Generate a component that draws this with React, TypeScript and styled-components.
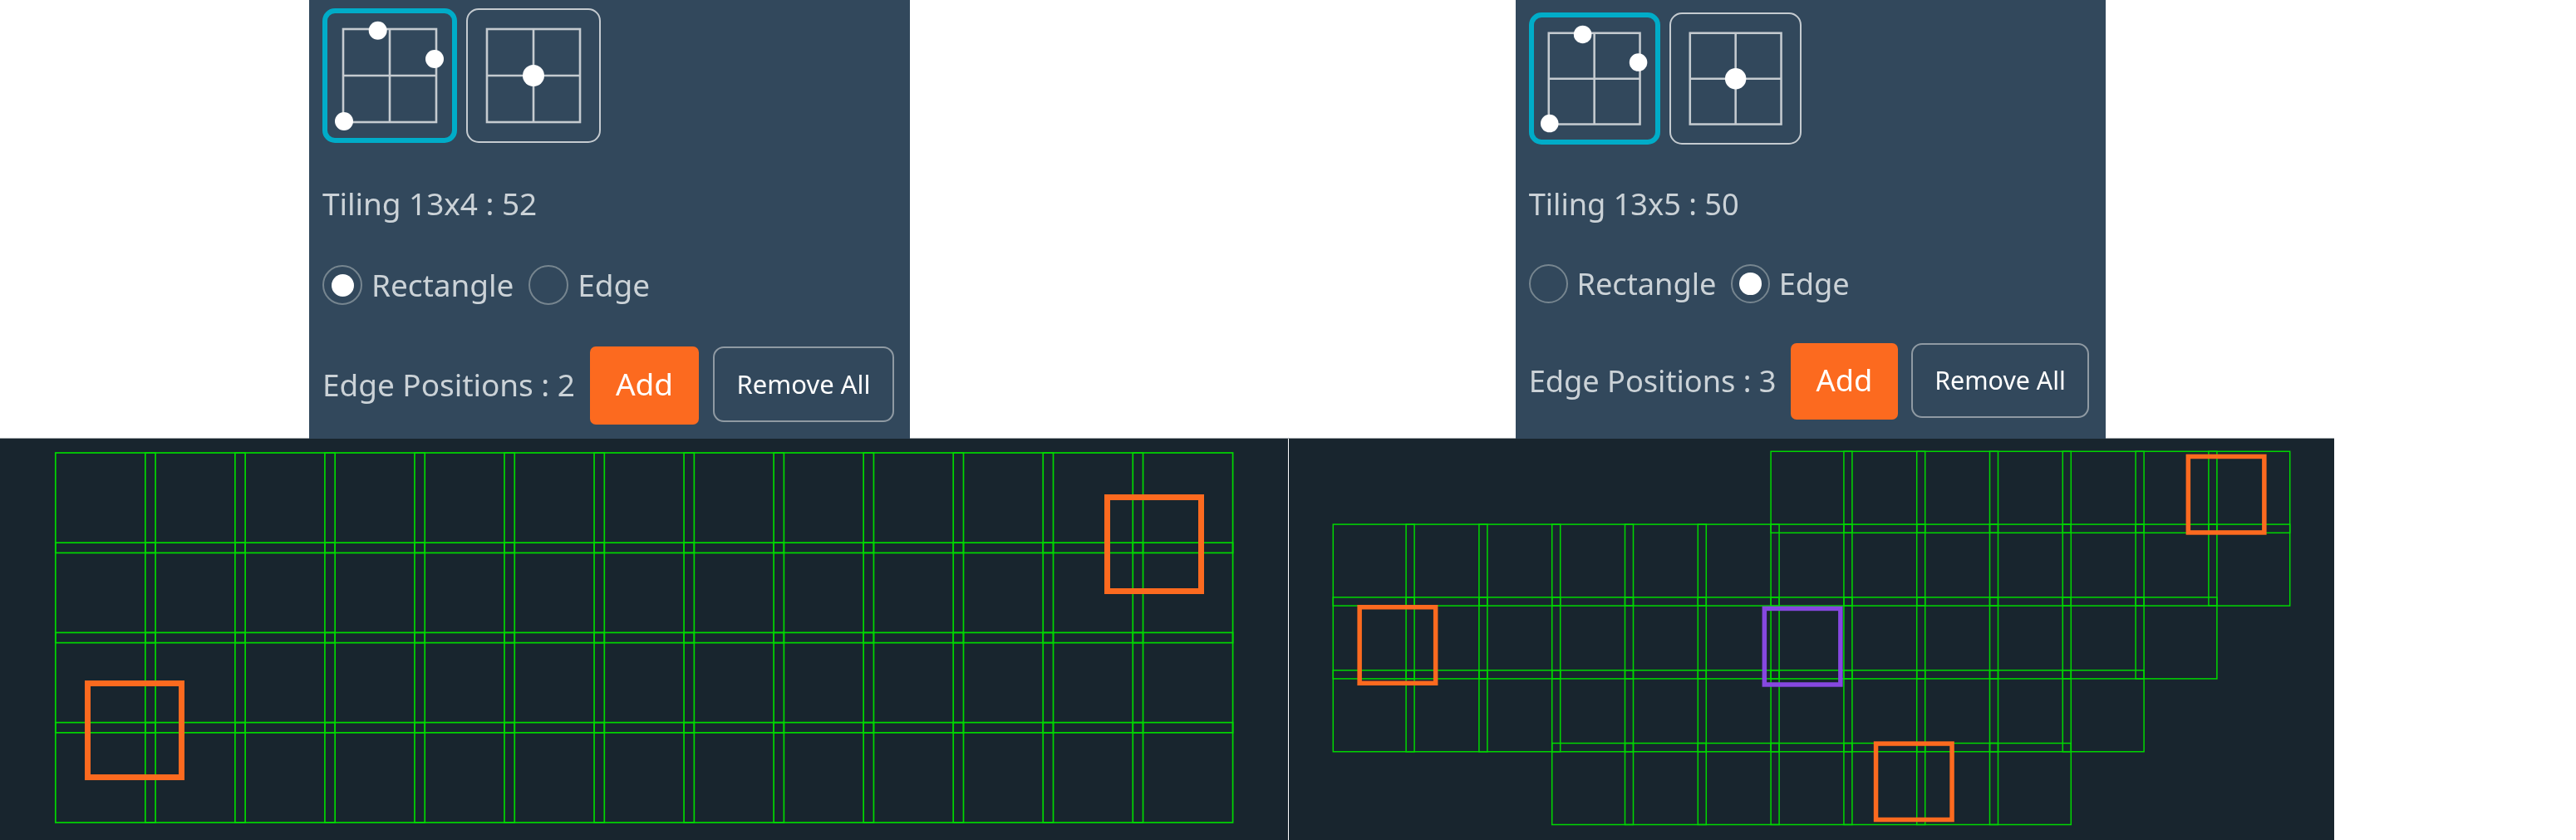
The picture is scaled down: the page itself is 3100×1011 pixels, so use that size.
import React, { FC } from 'react';
import styled, { createGlobalStyle } from 'styled-components';

const GlobalStyle = createGlobalStyle`
  html, body {
    margin: 0;
    padding: 0;
    background: #fff;
  }
  body {
    width: 3100px;
    height: 1011px;
    overflow: hidden;
    font-family: "Noto Sans", "Open Sans", sans-serif;
  }
`;

const colors = {
  panel: '#32485c',
  canvas: '#18252e',
  text: '#cbd2d7',
  line: '#c5cbd0',
  cyan: '#00acc8',
  orange: '#fc6a1f',
  purple: '#8648e0',
  green: '#00d800',
};

const Page = styled.div`
  display: flex;
  flex-direction: column;
  width: 3100px;
  height: 1011px;
`;

const TopRow = styled.div`
  display: flex;
  width: 2809px;
  height: 528px;
  padding-left: 372px;
  box-sizing: border-box;
  box-shadow: inset 0 -1px 0 #9ea3a8;
`;

const Panel = styled.div<{ $s: number; $width: number; $left: number; $top: number }>`
  width: ${p => p.$width}px;
  margin-left: ${p => p.$left}px;
  padding: ${p => p.$top}px 0 0 ${p => 16 * p.$s}px;
  box-sizing: border-box;
  background: ${colors.panel};
  color: ${colors.text};
  --s: ${p => p.$s};

  > * {
    filter: blur(0.5px);
  }
`;

const IconRow = styled.div`
  display: flex;
  gap: calc(11px * var(--s));
`;

const IconButton = styled.div<{ $active?: boolean }>`
  display: flex;
  align-items: center;
  justify-content: center;
  box-sizing: border-box;
  width: calc(162px * var(--s));
  height: calc(162px * var(--s));
  border: ${p => (p.$active ? `6px solid ${colors.cyan}` : `2.5px solid ${colors.line}`)};
  border-radius: 15px;

  svg {
    flex: none;
    width: calc(134px * var(--s));
    height: calc(134px * var(--s));
  }
`;

const Tiling = styled.div`
  margin-top: calc(48px * var(--s));
  height: calc(50px * var(--s));
  line-height: calc(50px * var(--s));
  font-size: calc(37px * var(--s));
  letter-spacing: -0.05px;
  white-space: nowrap;
`;

const RadioRow = styled.div`
  display: flex;
  align-items: center;
  margin-top: calc(49px * var(--s));
  height: calc(48px * var(--s));
`;

const RadioCircle = styled.span<{ $checked?: boolean }>`
  display: flex;
  align-items: center;
  justify-content: center;
  box-sizing: border-box;
  width: calc(48px * var(--s));
  height: calc(48px * var(--s));
  border: 2px solid #76858f;
  border-radius: 50%;

  &::after {
    content: '';
    display: ${p => (p.$checked ? 'block' : 'none')};
    width: calc(27px * var(--s));
    height: calc(27px * var(--s));
    border-radius: 50%;
    background: #fff;
  }
`;

const RadioLabel = styled.span`
  margin: 0 calc(18px * var(--s)) 0 calc(11px * var(--s));
  font-size: calc(37px * var(--s));
  line-height: calc(48px * var(--s));
  letter-spacing: -0.05px;
`;

const ActionRow = styled.div`
  display: flex;
  align-items: flex-start;
  margin-top: calc(49.5px * var(--s));
`;

const PositionsLabel = styled.div`
  width: calc(322px * var(--s));
  height: calc(94px * var(--s));
  line-height: calc(92px * var(--s));
  font-size: calc(37px * var(--s));
  letter-spacing: -0.05px;
  white-space: nowrap;
`;

const AddButton = styled.div`
  width: calc(131px * var(--s));
  height: calc(94px * var(--s));
  line-height: calc(90px * var(--s));
  margin-right: calc(17px * var(--s));
  border-radius: 7px;
  background: ${colors.orange};
  color: #fff;
  text-align: center;
  font-size: calc(37px * var(--s));
`;

const RemoveButton = styled.div`
  box-sizing: border-box;
  width: calc(218px * var(--s));
  height: calc(91px * var(--s));
  line-height: calc(87px * var(--s));
  border: 2px solid #8f9aa3;
  border-radius: 13px;
  color: #fff;
  text-align: center;
  font-size: calc(31px * var(--s));
`;

const BottomRow = styled.div`
  display: flex;
  flex: 1;
`;

const Canvas = styled.div<{ $width: number; $divider?: boolean }>`
  width: ${p => p.$width}px;
  height: 483px;
  box-sizing: border-box;
  background: ${colors.canvas};
  border-right: ${p => (p.$divider ? '1px solid #fff' : 'none')};

  svg {
    display: block;
  }
`;

interface Rect {
  x: number;
  y: number;
  w: number;
  h: number;
}

interface Marker {
  x: number;
  y: number;
  color: string;
}

// rows of the staggered tiling: first column and tile count
const staggeredRows = [
  { from: 6, count: 7 },
  { from: 0, count: 13 },
  { from: 0, count: 12 },
  { from: 0, count: 11 },
  { from: 3, count: 7 },
];

const leftTiles: Rect[] = [];
for (let row = 0; row < 4; row++) {
  for (let col = 0; col < 13; col++) {
    leftTiles.push({ x: 66.8 + col * 108.04, y: 17 + row * 108.2, w: 120.3, h: 120.4 });
  }
}

const rightTiles: Rect[] = [];
staggeredRows.forEach((row, r) => {
  for (let i = 0; i < row.count; i++) {
    rightTiles.push({ x: 53.3 + (row.from + i) * 87.8, y: 15.3 + r * 87.8, w: 97.8, h: 98 });
  }
});

const TileGrid: FC<{
  tiles: Rect[];
  markers: Marker[];
  size: number;
  border: number;
  stroke: number;
  width: number;
}> = ({ tiles, markers, size, border, stroke, width }) => (
  <svg width={width} height={483} viewBox={`0 0 ${width} 483`}>
    {tiles.map((t, i) => (
      <rect key={i} x={t.x} y={t.y} width={t.w} height={t.h} fill="none" stroke={colors.green} strokeWidth={stroke} />
    ))}
    {markers.map((m, i) => (
      <rect
        key={i}
        x={m.x + border / 2}
        y={m.y + border / 2}
        width={size - border}
        height={size - border}
        fill="none"
        stroke={m.color}
        strokeWidth={border}
      />
    ))}
  </svg>
);

const GridIcon: FC<{ dots: [number, number, number][] }> = ({ dots }) => (
  <svg viewBox="-6 -6 134 134">
    <rect x="5" y="5" width="112" height="112" fill="none" stroke={colors.line} strokeWidth="2.6" />
    <path d="M61 5V117M5 61H117" fill="none" stroke={colors.line} strokeWidth="2.6" />
    {dots.map(([cx, cy, r]) => (
      <circle key={`${cx}-${cy}`} cx={cx} cy={cy} r={r} fill="#fff" />
    ))}
  </svg>
);

const EdgePanel: FC<{
  scale: number;
  width: number;
  left: number;
  top: number;
  tiling: string;
  edge: boolean;
  positions: number;
}> = ({ scale, width, left, top, tiling, edge, positions }) => (
  <Panel $s={scale} $width={width} $left={left} $top={top}>
    <IconRow>
      <IconButton $active>
        <GridIcon
          dots={[
            [46.7, 6.7, 11],
            [115, 41, 11],
            [6, 116, 11],
          ]}
        />
      </IconButton>
      <IconButton>
        <GridIcon dots={[[61, 61, 13]]} />
      </IconButton>
    </IconRow>
    <Tiling>{tiling}</Tiling>
    <RadioRow>
      <RadioCircle $checked={!edge} />
      <RadioLabel>Rectangle</RadioLabel>
      <RadioCircle $checked={edge} />
      <RadioLabel>Edge</RadioLabel>
    </RadioRow>
    <ActionRow>
      <PositionsLabel>Edge Positions : {positions}</PositionsLabel>
      <AddButton>Add</AddButton>
      <RemoveButton>Remove All</RemoveButton>
    </ActionRow>
  </Panel>
);

const App: FC = () => (
  <Page>
    <GlobalStyle />
    <TopRow>
      <EdgePanel scale={1} width={723} left={0} top={10} tiling="Tiling 13x4 : 52" edge={false} positions={2} />
      <EdgePanel scale={0.98} width={710} left={729} top={15} tiling="Tiling 13x5 : 50" edge positions={3} />
    </TopRow>
    <BottomRow>
      <Canvas $width={1551} $divider>
        <TileGrid
          tiles={leftTiles}
          size={120}
          border={7}
          stroke={1.7}
          width={1550}
          markers={[
            { x: 102, y: 291, color: colors.orange },
            { x: 1329, y: 67, color: colors.orange },
          ]}
        />
      </Canvas>
      <Canvas $width={1258}>
        <TileGrid
          tiles={rightTiles}
          size={97}
          border={5.5}
          stroke={1.5}
          width={1258}
          markers={[
            { x: 82.4, y: 200, color: colors.orange },
            { x: 569.6, y: 201.7, color: colors.purple },
            { x: 703.8, y: 364.3, color: colors.orange },
            { x: 1079.6, y: 18.7, color: colors.orange },
          ]}
        />
      </Canvas>
    </BottomRow>
  </Page>
);

export default App;
